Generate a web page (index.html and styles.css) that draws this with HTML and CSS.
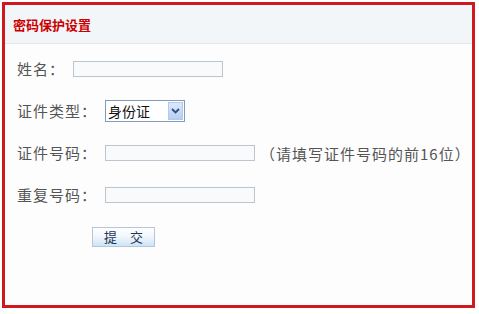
FILE: index.html
```html
<!doctype html>
<html lang="zh-CN">
<head>
    <title>密码保护设置</title>
    <meta charset="utf-8">
    <link rel="stylesheet" href="styles.css">
</head>
<body>
<div class="pwd-box">
    <div class="pwd-head">
        <h2>密码保护设置</h2>
    </div>
    <form class="pwd-form">
        <div class="row">
            <label>姓名：</label>
            <input type="text" class="txt">
        </div>
        <div class="row">
            <label>证件类型：</label>
            <div class="sel-wrap">
                <select class="sel">
                    <option>身份证</option>
                    <option>护照</option>
                    <option>军官证</option>
                </select>
                <span class="sel-arrow">
                    <svg width="9" height="6" viewBox="0 0 9 6"><path d="M1 1 L4.5 4.5 L8 1" fill="none" stroke="#2d4f86" stroke-width="1.8"/></svg>
                </span>
            </div>
        </div>
        <div class="row">
            <label>证件号码：</label>
            <input type="text" class="txt">
            <span class="tip">（请填写证件号码的前16位）</span>
        </div>
        <div class="row">
            <label>重复号码：</label>
            <input type="text" class="txt">
        </div>
        <div class="row">
            <button type="button" class="btn">提　交</button>
        </div>
    </form>
</div>
</body>
</html>
```

FILE: styles.css
```css
html, body { margin: 0; padding: 0; background: #fff; }
body {
    font-family: "Noto Sans CJK SC", "Liberation Sans", sans-serif;
    font-size: 14px;
    color: #555;
}
.pwd-box {
    margin: 2px;
    width: 473px;
    height: 306px;
    box-sizing: border-box;
    border: 3px solid #d0191f;
    background: #fdfdfe;
}
.pwd-head {
    height: 38px;
    display: flex;
    align-items: center;
    padding-left: 8px;
    background: #f3f6f9;
    border-bottom: 1px solid #e3e8ee;
}
.pwd-head h2 {
    margin: 0;
    font-size: 13px;
    font-weight: bold;
    color: #cc0000;
}
.pwd-form {
    padding: 4px 0 0 12px;
}
.row {
    height: 42px;
    display: flex;
    align-items: center;
}
.row label {
    font-size: 15px;
    letter-spacing: 1px;
    line-height: 16px;
}
.txt {
    width: 150px;
    height: 16px;
    box-sizing: border-box;
    margin: 0 0 0 8px;
    padding: 0 2px;
    border: 1px solid #bcc4ce;
    background: #f9fafc;
    outline: none;
}
.sel-wrap {
    position: relative;
    margin-left: 8px;
    width: 80px;
    height: 22px;
}
.sel {
    width: 80px;
    height: 22px;
    box-sizing: border-box;
    margin: 0;
    padding: 0 0 0 2px;
    border: 1px solid #7f9db9;
    background: #fff;
    font-family: inherit;
    font-size: 14px;
    color: #111;
    appearance: none;
    -webkit-appearance: none;
    outline: none;
}
.sel-arrow {
    position: absolute;
    top: 2px;
    right: 2px;
    width: 15px;
    height: 18px;
    display: flex;
    align-items: center;
    justify-content: center;
    box-sizing: border-box;
    border: 1px solid #b5c8ec;
    background: linear-gradient(#dde8fb, #b8cdf2);
    pointer-events: none;
}
.tip {
    margin-left: 5px;
    font-size: 15px;
    letter-spacing: 1px;
    color: #555;
}
.btn {
    margin-left: 75px;
    width: 63px;
    height: 20px;
    padding: 0;
    border: 1px solid #b7c6d6;
    background: linear-gradient(#ffffff, #f2f8fd 45%, #cde3f6);
    font-family: inherit;
    font-size: 13px;
    color: #1e3556;
    line-height: 18px;
}
```
